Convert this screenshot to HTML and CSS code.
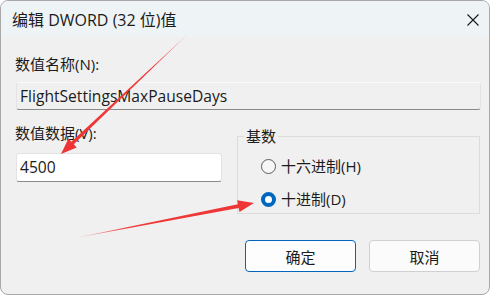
FILE: index.html
```html
<!DOCTYPE html>
<html lang="zh-CN">
<head>
<meta charset="utf-8">
<title>编辑 DWORD (32 位)值</title>
<link rel="stylesheet" href="styles.css">
</head>
<body>
<div class="window">
  <div class="titlebar">
    <span class="title">编辑 DWORD (32 位)值</span>
    <span class="close">
      <svg width="12" height="12" viewBox="0 0 12 12"><path d="M0.5 0.5 L11.5 11.5 M11.5 0.5 L0.5 11.5" stroke="#1a1a1a" stroke-width="1.1" fill="none"/></svg>
    </span>
  </div>
  <div class="content">
    <div class="label">数值名称(N):</div>
    <div class="field field-readonly"><span class="latin">FlightSettingsMaxPauseDays</span></div>
    <div class="grid">
      <div class="col-left">
        <div class="label">数值数据(V):</div>
        <div class="field field-edit"><span class="latin">4500</span></div>
      </div>
      <fieldset class="group">
        <legend class="group-label">基数</legend>
        <div class="radio-row">
          <span class="radio"></span><span class="radio-text">十六进制(H)</span>
        </div>
        <div class="radio-row">
          <span class="radio radio-checked"></span><span class="radio-text">十进制(D)</span>
        </div>
      </fieldset>
    </div>
    <div class="buttons">
      <div class="btn btn-default">确定</div>
      <div class="btn">取消</div>
    </div>
  </div>
  <svg class="arrows" width="490" height="295" viewBox="0 0 490 295">
    <defs>
      <linearGradient id="g1" gradientUnits="userSpaceOnUse" x1="190" y1="32" x2="61" y2="154">
        <stop offset="0" stop-color="#f25050" stop-opacity="0.35"/>
        <stop offset="0.3" stop-color="#ef3a3a"/>
        <stop offset="1" stop-color="#ee3535"/>
      </linearGradient>
      <linearGradient id="g2" gradientUnits="userSpaceOnUse" x1="75" y1="238" x2="254" y2="203">
        <stop offset="0" stop-color="#f25050" stop-opacity="0.35"/>
        <stop offset="0.3" stop-color="#ef3a3a"/>
        <stop offset="1" stop-color="#ee3535"/>
      </linearGradient>
    </defs>
    <polygon fill="url(#g1)" points="190,32 73.8,144.3 76.7,147.4 61,154 68.5,138.6 71.4,141.7"/>
    <polygon fill="url(#g2)" points="75,238 238.6,207.9 239.5,212 254,203 237.1,200.2 237.9,204.3"/>
  </svg>
</div>
</body>
</html>
```
FILE: styles.css
```css
html, body {
  margin: 0;
  padding: 0;
  background: #ffffff;
}
body {
  width: 495px;
  height: 297px;
  overflow: hidden;
  font-family: "Open Sans", "Noto Sans CJK SC", sans-serif;
  font-size: 15px;
  color: #1b1b1b;
}
.window {
  position: relative;
  width: 490px;
  height: 295px;
  box-sizing: border-box;
  border: 1px solid #a8a8a8;
  border-radius: 8px;
  background: #f0f0f0;
  overflow: hidden;
}
.titlebar {
  height: 36px;
  background: #eef4f5;
  display: flex;
  align-items: center;
  justify-content: space-between;
  padding-left: 11px;
  padding-right: 10px;
}
.title {
  font-size: 16px;
  line-height: 20px;
  margin-top: 2px;
}
.close {
  width: 12px;
  height: 12px;
  margin-top: 2px;
  display: flex;
}
.content {
  padding: 17px 9px 0 14px;
}
.label {
  line-height: 20px;
  height: 20px;
}
.latin {
  font-size: 15.6px;
}
.field {
  box-sizing: border-box;
  height: 28px;
  margin-top: 8px;
  border: 1px solid #e3e3e3;
  border-bottom: 1px solid #8a8a8a;
  border-radius: 3px;
  padding-left: 3px;
  line-height: 26px;
  margin-left: 1px;
}
.field-readonly {
  width: 465px;
  background: #f0f0f0;
  border-top-color: #fafafa;
}
.grid {
  display: grid;
  grid-template-columns: 207px 243px;
  column-gap: 15px;
  margin-top: 13px;
}
.field-edit {
  width: 206px;
  height: 29px;
  margin-top: 10px;
  background: #ffffff;
  line-height: 27px;
}
.group {
  margin: 3px 0 0 0;
  padding: 0;
  height: 86px;
  border: 1px solid #dcdcdc;
  border-radius: 0;
  min-width: 0;
}
.group-label {
  margin-left: 6px;
  padding: 0 2px;
  line-height: 20px;
}
.radio-row {
  display: flex;
  align-items: center;
  height: 20px;
  padding-left: 23px;
}
.radio-row:first-of-type {
  margin-top: 10px;
}
.radio-row + .radio-row {
  margin-top: 13px;
}
.radio {
  box-sizing: border-box;
  width: 15px;
  height: 15px;
  border-radius: 50%;
  border: 1px solid #5c5c5c;
  background: #f7f7f7;
  margin-right: 5px;
}
.radio-checked {
  border: 4px solid #0067c0;
  background: #ffffff;
}
.radio-text {
  line-height: 20px;
}
.buttons {
  display: flex;
  justify-content: flex-end;
  gap: 13px;
  margin-top: 26px;
}
.btn {
  box-sizing: border-box;
  width: 111px;
  height: 32px;
  border: 1px solid #d0d0d0;
  border-radius: 4px;
  background: #fbfbfb;
  display: flex;
  align-items: center;
  justify-content: center;
  font-size: 15px;
}
.btn-default {
  border: 1px solid #0067c0;
  background: #fdfdfd;
}
.arrows {
  position: absolute;
  left: -1px;
  top: -1px;
  pointer-events: none;
}
```
